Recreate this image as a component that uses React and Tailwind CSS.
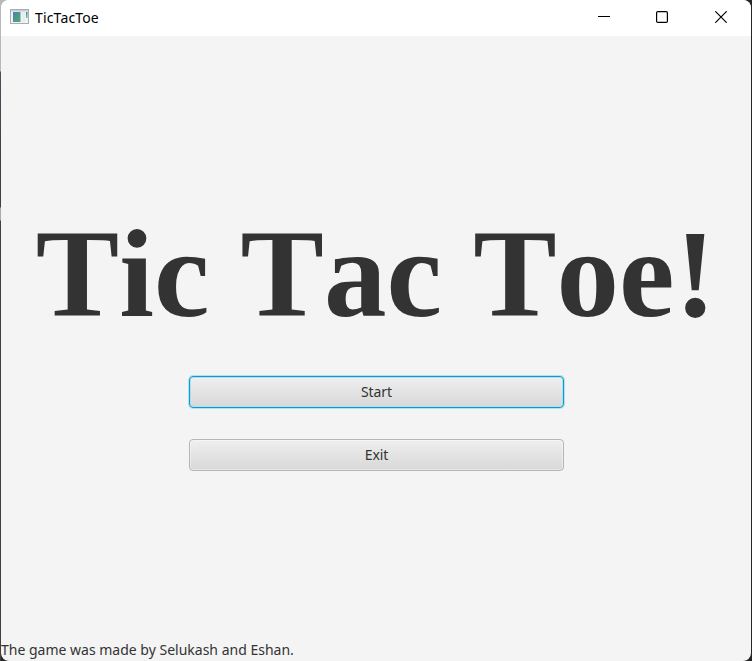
function AppIcon() {
  return (
    <svg width="19" height="16" viewBox="0 0 19 16" className="shrink-0">
      <defs>
        <linearGradient id="pane" x1="0" y1="0" x2="1" y2="1">
          <stop offset="0" stopColor="#4a83a8" />
          <stop offset="1" stopColor="#52aa72" />
        </linearGradient>
        <linearGradient id="bar" x1="0" y1="0" x2="0" y2="1">
          <stop offset="0" stopColor="#4580ad" />
          <stop offset="1" stopColor="#7cc09a" />
        </linearGradient>
      </defs>
      <rect x="0.5" y="0.5" width="18" height="14" fill="#f0f2f5" stroke="#a9adb5" />
      <rect x="1" y="1" width="17" height="1.5" fill="#c9ccd4" />
      <rect x="3" y="3" width="7.5" height="10" fill="url(#pane)" />
      <rect x="12" y="3" width="3" height="10" fill="#e4f0ee" />
      <rect x="16" y="3" width="1.5" height="6" fill="url(#bar)" />
    </svg>
  );
}

function TitleBar() {
  return (
    <header className="flex h-9 shrink-0 items-center bg-white">
      <div className="flex flex-1 items-center gap-[6px] pl-[9px] pb-[2px]">
        <AppIcon />
        <span className="pt-[2px] text-[14px] leading-5 tracking-[0.15px] text-black">TicTacToe</span>
      </div>
      <svg width="12" height="12" className="mr-[46px] mb-[2px]" stroke="#000" fill="none">
        <path d="M0 5.5H12" />
      </svg>
      <svg width="12" height="12" className="mr-[47px] mb-[2px]" stroke="#000" fill="none" strokeWidth="1.2">
        <rect x="0.6" y="0.6" width="10.8" height="10.8" rx="1.2" />
      </svg>
      <svg width="12" height="12" className="mr-[24px] mb-[2px]" stroke="#000" fill="none" strokeWidth="1.2">
        <path d="M0.3 0.3L11.7 11.7M11.7 0.3L0.3 11.7" />
      </svg>
    </header>
  );
}

export default function App() {
  return (
    <div className="h-[661px] w-[752px] overflow-hidden bg-[#262626] font-['Noto_Sans',sans-serif]">
      <div className="flex h-full bg-[linear-gradient(#b8b8b8_0_71px,#4b4d5b_72px,#444650_120px,#404040_170px,#404040_207px,#aaaaaa_208px_220px,#404040_221px),linear-gradient(#b8b8b8,#b8b8b8)] bg-[length:1px_100%,9px_9px] bg-no-repeat px-px">
        <div className="flex h-full w-full flex-col overflow-hidden rounded-[8px] bg-[#f4f4f4]">
          <TitleBar />
          <main className="flex flex-1 flex-col items-center">
            <h1 className="mt-[166px] whitespace-nowrap font-['Liberation_Serif',serif] text-[125px] font-bold leading-[144px] text-[#333333] [font-kerning:none]">
              Tic Tac Toe!
            </h1>
            <button className="mt-[30px] h-8 w-[375px] rounded-[4px] border border-[#039ed3] bg-linear-to-b from-[#efefef] to-[#d8d8d8] pb-px pl-px text-[14px] leading-5 tracking-[-0.1px] text-[#333333] shadow-[0_0_0_1px_#b4e1f1,inset_0_0_0_1px_#b9dce8]">
              Start
            </button>
            <button className="mt-[31px] h-8 w-[375px] rounded-[4px] border border-[#b5b5b5] bg-linear-to-b from-[#efefef] to-[#d8d8d8] pb-px pl-px text-[14px] leading-5 tracking-[-0.1px] text-[#333333] shadow-[inset_0_0_0_1px_#ffffff66]">
              Exit
            </button>
          </main>
          <footer className="h-[21px] whitespace-nowrap text-[14px] leading-5 text-[#333333]">
            The game was made by Selukash and Eshan.
          </footer>
        </div>
      </div>
    </div>
  );
}
